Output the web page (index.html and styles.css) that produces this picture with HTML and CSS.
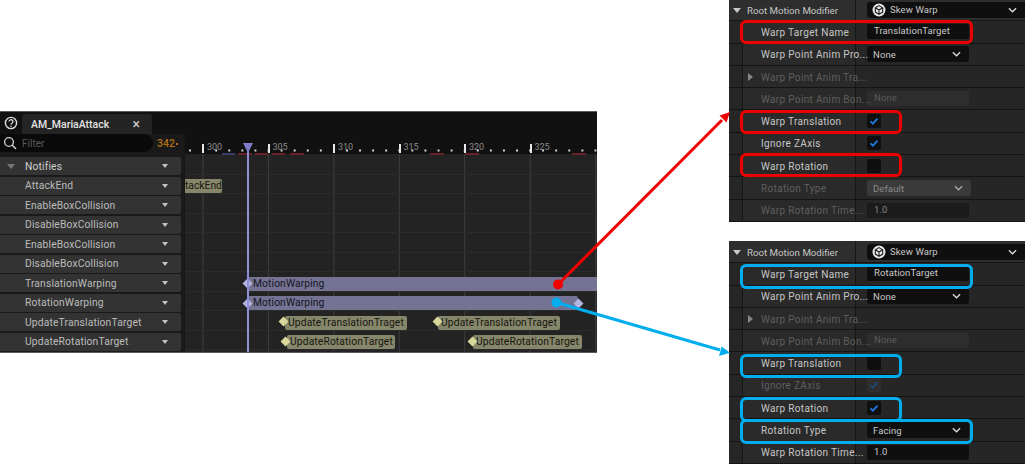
FILE: index.html
```html
<!DOCTYPE html>
<html lang="en">
<head>
<meta charset="utf-8">
<title>Motion warping notifies</title>
<link rel="stylesheet" href="styles.css">
</head>
<body>
<main class="canvas">

  <section class="seq">
    <header class="tabbar">
      <svg class="help" viewBox="0 0 14 14"><circle cx="7" cy="7" r="5.6" fill="none" stroke="#ddd" stroke-width="1.4"/><path d="M5.1 5.6a1.9 1.9 0 1 1 2.9 1.6c-.7.4-1 .7-1 1.4" fill="none" stroke="#ddd" stroke-width="1.3"/><circle cx="7" cy="10.2" r=".8" fill="#ddd"/></svg>
      <div class="tab"><span class="tab-name">AM_MariaAttack</span><span class="tab-close">×</span></div>
    </header>
    <div class="seq-body">
      <div class="side">
        <div class="filter">
          <div class="search">
            <svg class="glass" viewBox="0 0 14 14"><circle cx="6" cy="6" r="4.4" fill="none" stroke="#ccc" stroke-width="1.4"/><path d="M9.3 9.3l3.6 3.6" stroke="#ccc" stroke-width="1.5"/></svg>
            <span class="filter-text">Filter</span>
          </div>
          <span class="frame">342<i class="frame-dot"></i></span>
        </div>
        <ul class="tracks">
          <li class="track head"><i class="fold"></i><span>Notifies</span><i class="drop"></i></li>
          <li class="track"><span>AttackEnd</span><i class="drop"></i></li>
          <li class="track"><span>EnableBoxCollision</span><i class="drop"></i></li>
          <li class="track"><span>DisableBoxCollision</span><i class="drop"></i></li>
          <li class="track"><span>EnableBoxCollision</span><i class="drop"></i></li>
          <li class="track"><span>DisableBoxCollision</span><i class="drop"></i></li>
          <li class="track"><span>TranslationWarping</span><i class="drop"></i></li>
          <li class="track"><span>RotationWarping</span><i class="drop"></i></li>
          <li class="track"><span>UpdateTranslationTarget</span><i class="drop"></i></li>
          <li class="track"><span>UpdateRotationTarget</span><i class="drop"></i></li>
        </ul>
      </div>
      <div class="timeline">
        <div class="ruler">
          <span class="mark m0">300</span><span class="mark m1">305</span><span class="mark m2">310</span><span class="mark m3">315</span><span class="mark m4">320</span><span class="mark m5">325</span>
          <i class="seg s1 blue"></i><i class="seg s2"></i><i class="seg s3"></i><i class="seg s4"></i><i class="seg s5"></i><i class="seg s6"></i><i class="seg s7"></i><i class="seg s8"></i>
        </div>
        <div class="lanes">
          <div class="lane"></div>
          <div class="lane"><span class="clip end">tackEnd</span></div>
          <div class="lane"></div>
          <div class="lane"></div>
          <div class="lane"></div>
          <div class="lane"></div>
          <div class="lane"><span class="bar bar-a">MotionWarping</span><i class="dia warp d-a"></i></div>
          <div class="lane"><span class="bar bar-b">MotionWarping</span><i class="dia warp d-a"></i><i class="dia warp d-b"></i></div>
          <div class="lane"><span class="clip c-c">UpdateTranslationTraget</span><i class="dia d-c"></i><span class="clip c-d">UpdateTranslationTraget</span><i class="dia d-d"></i></div>
          <div class="lane"><span class="clip c-e">UpdateRotationTarget</span><i class="dia d-e"></i><span class="clip c-f">UpdateRotationTarget</span><i class="dia d-f"></i></div>
        </div>
        <i class="playhead"></i>
        <svg class="playcap" viewBox="0 0 10 10"><path d="M0 0h10L5 10z" fill="#7d7dc8"/></svg>
      </div>
    </div>
  </section>

  <section class="props props-a">
    <div class="prow phead"><div class="pname"><i class="fold white"></i>Root Motion Modifier</div><div class="pval"><div class="combo wide"><svg class="cube" viewBox="0 0 16 16"><circle cx="8" cy="8" r="7.4" fill="#e8e8e8"/><path d="M8 3l4.2 2.4v5L8 13l-4.2-2.6v-5zM3.8 5.4L8 8l4.2-2.6M8 8v5" fill="none" stroke="#222" stroke-width="1.3"/></svg><span>Skew Warp</span><svg class="chev" viewBox="0 0 10 6"><path d="M1 1l4 4 4-4" fill="none" stroke="#ddd" stroke-width="1.4"/></svg></div></div></div>
    <div class="prow"><div class="pname">Warp Target Name</div><div class="pval"><div class="input">TranslationTarget</div></div></div>
    <div class="prow"><div class="pname">Warp Point Anim Pro...</div><div class="pval"><div class="combo"><span>None</span><svg class="chev" viewBox="0 0 10 6"><path d="M1 1l4 4 4-4" fill="none" stroke="#ddd" stroke-width="1.4"/></svg></div></div></div>
    <div class="prow off"><div class="pname"><i class="expand"></i>Warp Point Anim Tra...</div><div class="pval"></div></div>
    <div class="prow off"><div class="pname">Warp Point Anim Bon...</div><div class="pval"><div class="input ghost">None</div></div></div>
    <div class="prow"><div class="pname">Warp Translation</div><div class="pval"><div class="check"><svg viewBox="0 0 14 14"><path d="M3.5 7.4l2.4 2.3 4.6-5" fill="none" stroke="#1c7be0" stroke-width="1.8"/></svg></div></div></div>
    <div class="prow"><div class="pname">Ignore ZAxis</div><div class="pval"><div class="check"><svg viewBox="0 0 14 14"><path d="M3.5 7.4l2.4 2.3 4.6-5" fill="none" stroke="#1c7be0" stroke-width="1.8"/></svg></div></div></div>
    <div class="prow"><div class="pname">Warp Rotation</div><div class="pval"><div class="check"></div></div></div>
    <div class="prow off"><div class="pname">Rotation Type</div><div class="pval"><div class="combo dim"><span>Default</span><svg class="chev" viewBox="0 0 10 6"><path d="M1 1l4 4 4-4" fill="none" stroke="#aaa" stroke-width="1.4"/></svg></div></div></div>
    <div class="prow off"><div class="pname">Warp Rotation Time...</div><div class="pval"><div class="input soft">1.0</div></div></div>
  </section>

  <section class="props props-b">
    <div class="prow phead"><div class="pname"><i class="fold white"></i>Root Motion Modifier</div><div class="pval"><div class="combo wide"><svg class="cube" viewBox="0 0 16 16"><circle cx="8" cy="8" r="7.4" fill="#e8e8e8"/><path d="M8 3l4.2 2.4v5L8 13l-4.2-2.6v-5zM3.8 5.4L8 8l4.2-2.6M8 8v5" fill="none" stroke="#222" stroke-width="1.3"/></svg><span>Skew Warp</span><svg class="chev" viewBox="0 0 10 6"><path d="M1 1l4 4 4-4" fill="none" stroke="#ddd" stroke-width="1.4"/></svg></div></div></div>
    <div class="prow"><div class="pname">Warp Target Name</div><div class="pval"><div class="input">RotationTarget</div></div></div>
    <div class="prow"><div class="pname">Warp Point Anim Pro...</div><div class="pval"><div class="combo"><span>None</span><svg class="chev" viewBox="0 0 10 6"><path d="M1 1l4 4 4-4" fill="none" stroke="#ddd" stroke-width="1.4"/></svg></div></div></div>
    <div class="prow off"><div class="pname"><i class="expand"></i>Warp Point Anim Tra...</div><div class="pval"></div></div>
    <div class="prow off"><div class="pname">Warp Point Anim Bon...</div><div class="pval"><div class="input ghost">None</div></div></div>
    <div class="prow"><div class="pname">Warp Translation</div><div class="pval"><div class="check"></div></div></div>
    <div class="prow off"><div class="pname">Ignore ZAxis</div><div class="pval"><div class="check ghostcheck"><svg viewBox="0 0 14 14"><path d="M3.5 7.4l2.4 2.3 4.6-5" fill="none" stroke="#1d4a7a" stroke-width="1.8"/></svg></div></div></div>
    <div class="prow"><div class="pname">Warp Rotation</div><div class="pval"><div class="check"><svg viewBox="0 0 14 14"><path d="M3.5 7.4l2.4 2.3 4.6-5" fill="none" stroke="#1c7be0" stroke-width="1.8"/></svg></div></div></div>
    <div class="prow"><div class="pname">Rotation Type</div><div class="pval"><div class="combo"><span>Facing</span><svg class="chev" viewBox="0 0 10 6"><path d="M1 1l4 4 4-4" fill="none" stroke="#ddd" stroke-width="1.4"/></svg></div></div></div>
    <div class="prow"><div class="pname">Warp Rotation Time...</div><div class="pval"><div class="input">1.0</div></div></div>
  </section>

  <i class="hl red h1"></i><i class="hl red h2"></i><i class="hl red h3"></i>
  <i class="hl cyan h4"></i><i class="hl cyan h5"></i><i class="hl cyan h6"></i><i class="hl cyan h7"></i>

  <svg class="arrows" viewBox="0 0 1025 464">
    <circle cx="558" cy="284.5" r="5" fill="#f00000"/>
    <path d="M558 284.5L722 120" stroke="#f00000" stroke-width="3"/>
    <path d="M730 112l-3.500 10.500-7-7z" fill="#f00000"/>
    <circle cx="556.500" cy="302.500" r="5" fill="#00aeef"/>
    <path d="M556.500 302.500L720 350" stroke="#00aeef" stroke-width="3"/>
    <path d="M730 352.700l-11 3.300 2.600-9.500z" fill="#00aeef"/>
  </svg>
</main>
</body>
</html>
```
FILE: styles.css
```css
* { box-sizing: border-box; margin: 0; padding: 0; }
html, body { background: #fff; }
body { font-family: Roboto, "Liberation Sans", sans-serif; overflow: hidden; }
.canvas { position: relative; width: 1025px; height: 464px; overflow: hidden; background: #fff; }
i { display: block; }
ul { list-style: none; }

/* sequencer window */
.seq { position: absolute; left: 0; top: 111px; width: 597px; height: 242px; background: #1b1b1b; border-top: 1px solid #5a5a5a; border-bottom: 1px solid #5a5a5a; display: flex; flex-direction: column; overflow: hidden; }
.tabbar { height: 22px; background: #111; display: flex; align-items: flex-end; flex: none; }
.help { width: 14px; height: 14px; margin: 0 4px 4px 4px; flex: none; }
.tab { width: 130px; height: 20px; background: #242424; border-radius: 3px 3px 0 0; display: flex; align-items: center; padding: 0 12px 0 9px; justify-content: space-between; color: #e4e4e4; font-size: 10.5px; font-weight: 500; }
.tab-close { font-size: 14px; color: #c8c8c8; line-height: 1; }
.seq-body { flex: 1; display: flex; min-height: 0; }
.side { width: 185px; flex: none; background: #1a1a1a; border-right: 1px solid #151515; }
.filter { height: 23px; display: flex; align-items: flex-start; }
.search { width: 153px; height: 18px; background: #0a0a0a; border-radius: 0 9px 9px 0; display: flex; align-items: center; padding-left: 3px; }
.glass { width: 14px; height: 14px; flex: none; }
.filter-text { margin-left: 5px; font-size: 10px; color: #5a5a5a; }
.frame { margin: 3px 0 0 4px; font-size: 10.5px; color: #b06f12; display: flex; align-items: center; font-weight: 500; }
.frame-dot { width: 2px; height: 2px; margin-left: 1px; background: #b06f12; }
.tracks { display: grid; grid-auto-rows: 19.55px; width: 181px; }
.track { display: flex; align-items: center; height: 18px; background: #333; border-radius: 0 2px 2px 0; padding: 0 13px 0 25px; font-size: 10.3px; color: #bcbcbc; letter-spacing: .15px; }
.track span { flex: 1; white-space: nowrap; }
.head { padding-left: 7px; color: #d0d0d0; }
.head span { margin-left: 10px; }
.fold { width: 0; height: 0; border-left: 4.500px solid transparent; border-right: 4.500px solid transparent; border-top: 5px solid #777; flex: none; }
.fold.white { border-top-color: #c8c8c8; margin-right: 6px; }
.drop { width: 0; height: 0; border-left: 3.500px solid transparent; border-right: 3.500px solid transparent; border-top: 4px solid #c4c4c4; flex: none; }

/* timeline */
.timeline { position: relative; flex: 1; min-width: 0; }
.ruler { position: relative; height: 20px; background-color: #111; background-image: radial-gradient(circle, #e0e0e0 0 1px, transparent 1.2px); background-size: 13.09px 3px; background-position: -1.500px 15px; background-repeat: repeat-x; }
.mark { position: absolute; top: 10px; padding-left: 3px; border-left: 2px solid #e8e8e8; height: 9px; font-size: 9px; line-height: 7px; color: #8c8c8c; }
.m0 { left: 17px; } .m1 { left: 82.500px; } .m2 { left: 148px; } .m3 { left: 213.500px; } .m4 { left: 279px; } .m5 { left: 344.500px; }
.seg { position: absolute; bottom: -1px; height: 2px; background: #6a2227; }
.seg.blue { background: #3c3c68; }
.s1 { left: 37px; width: 13px; }
.s2 { left: 53px; width: 14px; }
.s3 { left: 70px; width: 13px; }
.s4 { left: 87px; width: 13px; }
.s5 { left: 105px; width: 14px; }
.s6 { left: 245px; width: 14px; }
.s7 { left: 280px; width: 14px; }
.s8 { left: 387px; width: 14px; }
.lanes { display: grid; grid-auto-rows: 19.55px; height: 199px; background-color: #232323; background-image: linear-gradient(90deg, #3d3d3d 0 1px, transparent 1px); background-size: 65.45px 100%; background-position: 17.500px 0; padding-top: 1px; }
.lane { position: relative; border-bottom: 1px solid #2b2b2b; }
.clip, .bar { position: absolute; top: 4.500px; height: 14px; border-radius: 2px; font-size: 10.3px; line-height: 14px; white-space: nowrap; }
.clip { background: #86866a; color: #161610; padding: 0 0 0 3px; letter-spacing: .12px; }
.bar { background: #747394; color: #15151f; padding-left: 6px; letter-spacing: .1px; }
.end { left: 0; width: 37px; border-radius: 0 2px 2px 0; padding-left: 0; letter-spacing: 0; }
.bar-a { left: 62px; width: 350px; border-radius: 0; }
.bar-b { left: 62px; width: 331px; }
.dia { position: absolute; top: 7px; width: 7px; height: 7px; transform: rotate(45deg); background: #d8d89c; }
.dia.warp { background: #b4b4e0; top: 8px; }
.d-a { left: 59px; }
.d-b { left: 390px; }
.d-c { left: 94.500px; } .c-c { left: 100px; width: 122px; }
.d-d { left: 248.500px; } .c-d { left: 253px; width: 122px; }
.d-e { left: 96.500px; } .c-e { left: 102px; width: 108px; }
.d-f { left: 283.500px; } .c-f { left: 288px; width: 109px; }
.playhead { position: absolute; left: 61.500px; top: 17px; bottom: 0; width: 2px; background: #8d8dd8; }
.playcap { position: absolute; left: 57.500px; top: 9px; width: 10px; height: 10px; }

/* details panels */
.props { position: absolute; left: 729px; width: 296px; background: #1c1c1c; display: flex; flex-direction: column; }
.props-a { top: -1px; height: 223px; }
.props-b { top: 241px; height: 223px; }
.prow { flex: none; height: 22.3px; display: flex; border-bottom: 1px solid #141414; background: #262626; font-size: 9.5px; color: #c6c6c6; letter-spacing: .1px; }
.prow .pname { margin-left: 13px; width: 113px; border-left: 1px solid #161616; background: #2a2a2a; padding: 1px 0 0 18px; display: flex; align-items: center; white-space: nowrap; position: relative; font-size: 10px; letter-spacing: .33px; }
.phead .pname { margin-left: 0; width: 126px; padding-left: 4px; border-left: 0; background: #2e2e2e; font-size: 9.7px; letter-spacing: 0; }
.phead { background: #2e2e2e; }
.pval { flex: 1; border-left: 1px solid #161616; display: flex; align-items: center; padding-left: 11px; }
.off { color: #5f5f5f; }
.combo { width: 102px; height: 16px; background: #0f0f0f; border-radius: 3px; display: flex; align-items: center; padding: 0 8px 0 6px; color: #c8c8c8; justify-content: space-between; }
.combo.wide { width: 158px; padding-left: 5px; border-radius: 3px 0 0 3px; justify-content: flex-start; }
.combo.wide span { flex: 1; margin-left: 4px; }
.combo.dim { background: #3a3a3a; color: #8a8a8a; width: 104px; }
.chev { width: 9px; height: 6px; flex: none; }
.cube { width: 14px; height: 14px; flex: none; }
.input { width: 102px; height: 15px; background: #0f0f0f; border-radius: 2px; color: #c8c8c8; padding-left: 7px; line-height: 14px; }
.input.ghost { background: #2e2e2e; color: #5c5c5c; }
.input.soft { background: #1b1b1b; color: #858585; }
.check { width: 14px; height: 14px; background: #0f0f0f; border-radius: 2px; }
.ghostcheck { background: #2e2e2e; }
.check svg { display: block; width: 14px; height: 14px; }
.expand { position: absolute; left: 5px; top: 7px; width: 0; height: 0; border-top: 4.500px solid transparent; border-bottom: 4.500px solid transparent; border-left: 5px solid #888; }

/* annotations */
.hl { position: absolute; border: 3px solid; border-radius: 6px; }
.red { border-color: #ee0000; }
.cyan { border-color: #00aeef; }
.h1 { left: 740px; top: 20px; width: 233px; height: 24px; }
.h2 { left: 740px; top: 110px; width: 162px; height: 24px; }
.h3 { left: 740px; top: 153px; width: 162px; height: 24px; }
.h4 { left: 740px; top: 264px; width: 233px; height: 25px; }
.h5 { left: 740px; top: 354px; width: 162px; height: 24px; }
.h6 { left: 740px; top: 397px; width: 162px; height: 25px; }
.h7 { left: 740px; top: 419px; width: 233px; height: 25px; }
.arrows { position: absolute; left: 0; top: 0; width: 1025px; height: 464px; pointer-events: none; }
```
